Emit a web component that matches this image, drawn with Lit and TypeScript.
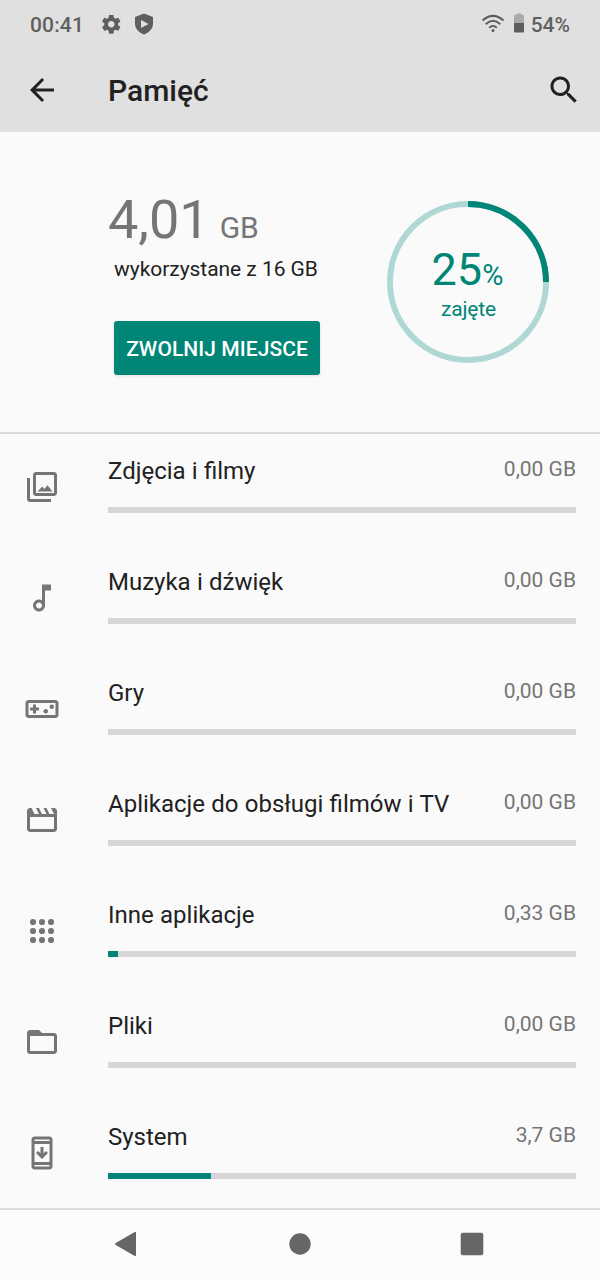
import { LitElement, html, css, svg } from "lit";
import { customElement, property } from "lit/decorators.js";

const icons: Record<string, unknown> = {
  photos: svg`<path d="M20 4v12H8V4h12m0-2H8c-1.1 0-2 .9-2 2v12c0 1.1.9 2 2 2h12c1.1 0 2-.9 2-2V4c0-1.1-.9-2-2-2zM12.200 11.670l1.300 1.700 2.200-2.600L19 15H9zM2 6v14c0 1.100.9 2 2 2h14v-2H4V6H2z"/>`,
  music: svg`<path d="M12 3l.01 10.550c-.59-.34-1.270-.55-2-.55C7.790 13 6 14.790 6 17s1.790 4 4.010 4S14 19.210 14 17V7h4V3h-6zm-1.990 16c-1.100 0-2-.9-2-2s.9-2 2-2 2 .9 2 2-.9 2-2 2z"/>`,
  games: svg`<path d="M21 6H3c-1.100 0-2 .9-2 2v8c0 1.100.9 2 2 2h18c1.100 0 2-.9 2-2V8c0-1.100-.9-2-2-2zm0 10H3V8h18v8zM6 15h2v-2h2v-2H8V9H6v2H4v2h2z"/><circle cx="14.500" cy="13.500" r="1.500"/><circle cx="18.500" cy="10.500" r="1.500"/>`,
  movies: svg`<path d="M18 4l2 4h-3l-2-4h-2l2 4h-3l-2-4H8l2 4H7L5 4H4c-1.100 0-1.990.9-1.990 2L2 18c0 1.100.9 2 2 2h16c1.100 0 2-.9 2-2V6c0-1.100-.9-2-2-2h-2zM4 10h16v8H4v-8z" fill-rule="evenodd"/>`,
  apps: svg`${[6, 12, 18].map((y) => [6, 12, 18].map((x) => svg`<circle cx=${x} cy=${y} r="2.050"/>`))}`,
  files: svg`<path d="M20 6h-8l-2-2H4c-1.100 0-1.990.9-1.990 2L2 18c0 1.100.9 2 2 2h16c1.100 0 2-.9 2-2V8c0-1.100-.9-2-2-2zm0 12H4V8h16v10z"/>`,
  system: svg`<path d="M17 1H7c-1.100 0-2 .9-2 2v18c0 1.100.9 2 2 2h10c1.100 0 2-.9 2-2V3c0-1.100-.9-2-2-2zm0 20H7v-1h10v1zm0-3H7V6h10v12zm0-14H7V3h10v1zM16 12l-1.410-1.410L13 12.170V8h-2v4.170l-1.590-1.580L8 12l4 4 4-4z"/>`,
  back: svg`<path d="M20 11H7.830l5.590-5.590L12 4l-8 8 8 8 1.410-1.410L7.830 13H20v-2z"/>`,
  search: svg`<path d="M15.500 14h-.79l-.28-.27C15.410 12.590 16 11.110 16 9.500 16 5.910 13.090 3 9.500 3S3 5.910 3 9.500 5.910 16 9.500 16c1.610 0 3.090-.59 4.230-1.570l.27.28v.79l5 4.990L20.490 19l-4.990-5zm-6 0C7.010 14 5 11.990 5 9.500S7.010 5 9.500 5 14 7.010 14 9.500 11.990 14 9.500 14z"/>`,
  gear: svg`<path d="M19.430 12.980c.04-.32.07-.64.07-.98s-.03-.66-.07-.98l2.110-1.650c.19-.15.24-.42.12-.64l-2-3.460c-.12-.22-.39-.3-.61-.22l-2.490 1c-.52-.4-1.080-.73-1.690-.98l-.38-2.650C14.460 2.180 14.250 2 14 2h-4c-.25 0-.46.18-.49.42l-.38 2.650c-.61.25-1.170.59-1.690.98l-2.490-1c-.23-.09-.49 0-.61.22l-2 3.460c-.13.22-.07.49.12.64l2.110 1.650c-.04.32-.07.65-.07.98s.03.66.07.98l-2.110 1.650c-.19.15-.24.42-.12.64l2 3.460c.12.22.39.3.61.22l2.490-1c.52.4 1.080.73 1.690.98l.38 2.650c.03.24.24.42.49.42h4c.25 0 .46-.18.49-.42l.38-2.650c.61-.25 1.170-.59 1.690-.98l2.490 1c.23.09.49 0 .61-.22l2-3.460c.12-.22.07-.49-.12-.64l-2.110-1.650zM12 15.500c-1.930 0-3.500-1.570-3.500-3.500s1.570-3.500 3.500-3.500 3.500 1.570 3.500 3.500-1.570 3.500-3.500 3.500z"/>`,
  shield: svg`<path fill-rule="evenodd" d="M12 1.500L3 5v6.500c0 5.100 3.800 9.300 9 11 5.200-1.700 9-5.900 9-11V5zM9 8l7.500 4L9 16z"/>`,
};

@customElement("app-icon")
export class AppIcon extends LitElement {
  @property() name = "";
  static styles = css`
    :host { display: block; width: 36px; height: 36px; flex: none; }
    svg { display: block; width: 100%; height: 100%; fill: currentColor; }
  `;
  render() {
    return html`<svg viewBox="0 0 24 24">${icons[this.name]}</svg>`;
  }
}

@customElement("storage-row")
export class StorageRow extends LitElement {
  @property() icon = "";
  @property() label = "";
  @property() size = "";
  @property({ type: Number }) used = 0;
  static styles = css`
    :host { display: flex; height: 111px; box-sizing: border-box; padding: 0 24px; }
    .icon { color: #757575; margin: 35px 48px 0 0; }
    .body { flex: 1; padding-top: 21px; }
    .line { display: flex; justify-content: space-between; height: 52px; }
    .label { font-size: 24px; line-height: 32px; word-spacing: 0.300px; color: #212121; }
    .size { font-size: 21px; line-height: 28px; color: #757575; }
    .track { height: 6px; background: #d6d6d6; }
    .fill { height: 100%; background: #008577; }
  `;
  render() {
    return html`
      <app-icon class="icon" name=${this.icon}></app-icon>
      <div class="body">
        <div class="line"><span class="label">${this.label}</span><span class="size">${this.size}</span></div>
        <div class="track"><div class="fill" style="width:${this.used}px"></div></div>
      </div>`;
  }
}

@customElement("app-root")
export class AppRoot extends LitElement {
  private rows = [
    ["photos", "Zdjęcia i filmy", "0,00 GB", 0],
    ["music", "Muzyka i dźwięk", "0,00 GB", 0],
    ["games", "Gry", "0,00 GB", 0],
    ["movies", "Aplikacje do obsługi filmów i TV", "0,00 GB", 0],
    ["apps", "Inne aplikacje", "0,33 GB", 10],
    ["files", "Pliki", "0,00 GB", 0],
    ["system", "System", "3,7 GB", 103],
  ] as const;

  static styles = css`
    :host { display: flex; flex-direction: column; width: 600px; height: 1280px; overflow: hidden;
      background: #fafafa; font-family: Roboto, sans-serif; color: #212121; }
    .status { height: 48px; flex: none; box-sizing: border-box; padding: 1px 30px 0; background: #e0e0e0; color: #5f5f5f;
      display: flex; align-items: center; font-size: 21px; font-weight: 500; line-height: 48px; }
    .clock { width: 70px; letter-spacing: 0.150px; }
    .gear { width: 22.500px; height: 22.500px; }
    .shield { width: 24px; height: 24px; margin: -1px 0 0 9.500px; }
    .right { margin-left: auto; display: flex; align-items: center; }
    .wifi { width: 24px; height: 20px; margin-right: 8px; margin-top: -3px; }
    .battery { width: 12px; height: 20px; margin-right: 6px; margin-top: -4px; }
    .bar { height: 84px; flex: none; background: #e0e0e0; display: flex; align-items: center; box-sizing: border-box; padding: 0 18px 0 24px; }
    .title { margin-left: 48px; flex: 1; font-size: 30px; font-weight: 500; line-height: 84px; padding-top: 2px; }
    .summary { height: 300px; flex: none; border-bottom: 2px solid #dadade; display: flex; justify-content: space-between;
      padding: 0 51px 0 108px; }
    .info { padding-top: 55px; }
    .amount { height: 66px; line-height: 66px; color: #757575; font-size: 54px; white-space: nowrap; }
    .unit { font-size: 30px; margin-left: 10px; }
    .caption { margin: 1px 0 0 6px; font-size: 21px; line-height: 30px; letter-spacing: -0.040px; }
    .button { display: block; margin: 37px 0 0 6px; width: 206px; height: 54px; border: 0; border-radius: 3px; padding: 2px 0 0;
      background: #008577; color: #fff; font: 500 21px/52px Roboto, sans-serif; letter-spacing: 0.060px; text-align: center;
      box-shadow: 0 1px 3px rgba(0,0,0,.12); white-space: nowrap; }
    .donut { display: grid; width: 162px; height: 162px; margin-top: 69px; }
    .ring, .reading { grid-area: 1 / 1; }
    .reading { color: #008577; text-align: center; padding-top: 42px; }
    .percent { height: 54px; font-size: 45px; line-height: 54px; margin-left: -1px; }
    .sign { font-size: 29px; }
    .used { font-size: 21px; line-height: 25px; letter-spacing: -0.150px; padding-left: 1px; }
    .list { flex: 1; min-height: 0; overflow: hidden; }
    .nav { height: 70px; flex: none; border-top: 2px solid #dadada; background: #fcfcfc; display: flex; }
    .nav svg { width: 600px; height: 70px; fill: #666; }
  `;

  render() {
    return html`
      <div class="status">
        <span class="clock">00:41</span>
        <app-icon class="gear" name="gear"></app-icon>
        <app-icon class="shield" name="shield"></app-icon>
        <div class="right">
          <svg class="wifi" viewBox="0 0 24 20" fill="none" stroke="#5c5c5c" stroke-width="2">
            <path d="M1.500 7.500Q12-1.800 22.500 7.500M4.700 11.200Q12 4.400 19.300 11.200M8.200 14.700Q12 11.200 15.800 14.700"/>
            <circle cx="12" cy="17.500" r="1.500" fill="#5c5c5c" stroke="none"/>
          </svg>
          <svg class="battery" viewBox="0 0 12 20">
            <path fill="#aaa" d="M3.500 0.500h5v1.500H10a1 1 0 0 1 1 1V10H1V3a1 1 0 0 1 1-1h1.500z"/>
            <path fill="#5c5c5c" d="M1 10h10v8.500a1 1 0 0 1-1 1H2a1 1 0 0 1-1-1z"/>
          </svg>
          <span>54%</span>
        </div>
      </div>
      <div class="bar">
        <app-icon name="back"></app-icon>
        <span class="title">Pamięć</span>
        <app-icon name="search"></app-icon>
      </div>
      <div class="summary">
        <div class="info">
          <div class="amount">4,01<span class="unit">GB</span></div>
          <div class="caption">wykorzystane z 16 GB</div>
          <button class="button">ZWOLNIJ MIEJSCE</button>
        </div>
        <div class="donut">
          <svg class="ring" viewBox="0 0 162 162" fill="none" stroke-width="6">
            <circle cx="81" cy="81" r="78" stroke="#afd8d4"/>
            <path d="M81 3A78 78 0 0 1 159 81" stroke="#008577"/>
          </svg>
          <div class="reading">
            <div class="percent">25<span class="sign">%</span></div>
            <div class="used">zajęte</div>
          </div>
        </div>
      </div>
      <div class="list">
        ${this.rows.map(([icon, label, size, used]) => html`
          <storage-row icon=${icon} label=${label} size=${size} used=${used}></storage-row>`)}
      </div>
      <div class="nav">
        <svg viewBox="0 0 600 70">
          <path d="M134.300 22.200Q136 21.200 136 23V45Q136 46.800 134.300 45.800L115.700 35Q114.300 34 115.700 33z"/>
          <circle cx="300" cy="34" r="10.700"/>
          <rect x="460.700" y="22.700" width="22.600" height="22.600" rx="2"/>
        </svg>
      </div>`;
  }
}
